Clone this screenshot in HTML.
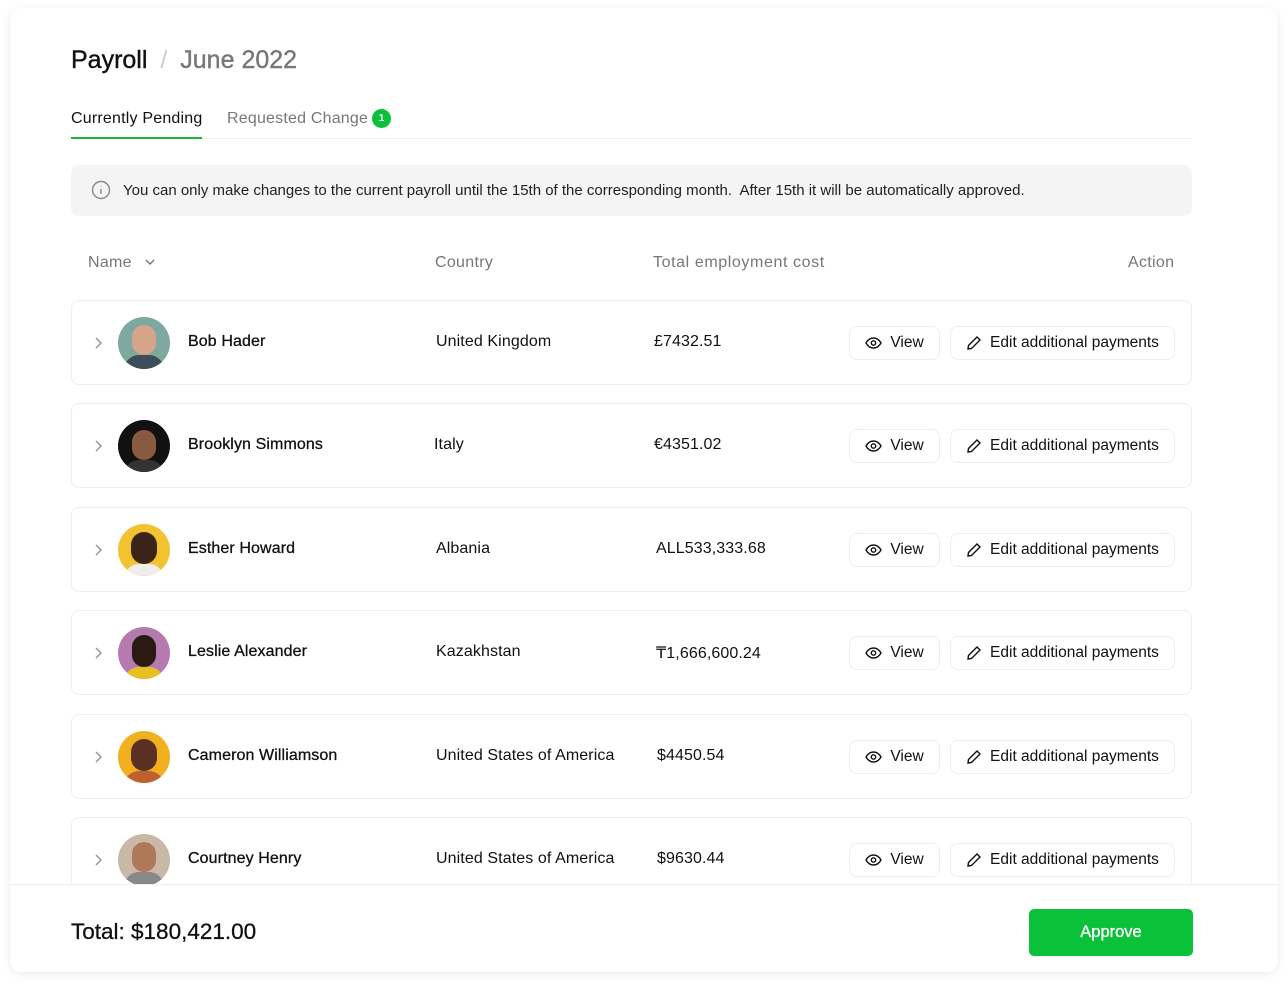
<!DOCTYPE html>
<html><head><meta charset="utf-8"><style>
*{box-sizing:border-box;margin:0;padding:0}
body{width:1288px;height:987px;background:#fff;font-family:"Liberation Sans",sans-serif;color:#111;position:relative;overflow:hidden}
.card{position:absolute;left:10px;top:8px;width:1268px;height:964px;background:#fff;border-radius:12px;box-shadow:0 2px 10px rgba(0,0,0,.08);overflow:hidden}
.t{position:absolute;white-space:nowrap}
.row{position:absolute;left:61px;width:1121px;height:85px;border:1px solid #eee;border-radius:8px;background:#fff}
.row .t{top:32px;font-size:16px;letter-spacing:0.1px}
.row .nm{-webkit-text-stroke:0.3px #111}
.av{position:absolute;left:46px;top:16px;width:52px;height:52px;border-radius:50%;overflow:hidden}
.btn{position:absolute;top:25px;height:34px;border:1px solid #eee;border-radius:8px;font-size:15.5px;display:flex;align-items:center;justify-content:center;gap:8px;color:#111}
.chev{position:absolute;left:20px;top:35px}
.foot{position:absolute;left:0;top:876px;width:1268px;height:88px;background:#fff;border-top:1px solid #eee}
.hd{top:246px;font-size:16px;color:#777;letter-spacing:0.3px}
</style></head><body>
<div class="card">
<div class="t" style="left:61px;top:38px;font-size:25px;-webkit-text-stroke:0.4px #111">Payroll <span style="color:#ccc;margin:0 6px;-webkit-text-stroke:0">/</span> <span style="color:#777;-webkit-text-stroke:0.4px #777">June 2022</span></div>
<div class="t" style="left:61px;top:102px;font-size:16px;letter-spacing:0.2px">Currently Pending</div>
<div class="t" style="left:217px;top:102px;font-size:16px;color:#777;letter-spacing:0.2px">Requested Change</div>
<div class="t" style="left:362px;top:101px;width:19px;height:19px;border-radius:50%;background:#0cc13a;color:#fff;font-size:10px;font-weight:bold;text-align:center;line-height:19px">1</div>
<div class="t" style="left:61px;top:130px;width:1121px;height:1px;background:#eee"></div>
<div class="t" style="left:61px;top:129px;width:131px;height:2px;background:#1db33c"></div>
<div class="t" style="left:61px;top:157px;width:1121px;height:51px;background:#f4f4f4;border-radius:8px"></div>
<svg class="t" style="left:81px;top:172px" width="20" height="20" viewBox="0 0 20 20" fill="none" stroke="#888" stroke-width="1.4"><circle cx="10" cy="10" r="8.5"/><path d="M10 9v5M10 6v.5"/></svg>
<div class="t" style="left:113px;top:174px;font-size:15px;color:#222">You can only make changes to the current payroll until the 15th of the corresponding month.&nbsp; After 15th it will be automatically approved.</div>
<div class="t hd" style="left:78px">Name <svg width="14" height="10" viewBox="0 0 14 10" style="margin-left:6px"><path d="M3 3l4 4 4-4" stroke="#777" stroke-width="1.5" fill="none"/></svg></div>
<div class="t hd" style="left:425px">Country</div>
<div class="t hd" style="left:643px;letter-spacing:0.6px">Total employment cost</div>
<div class="t hd" style="left:1118px">Action</div>

<div class="row" style="top:292px">
<svg class="chev" width="12" height="14"><path d="M4 2l5 5-5 5" stroke="#999" stroke-width="1.5" fill="none"/></svg>
<div class="av" style="background:#7fa8a0"><div style="position:absolute;left:14px;top:8px;width:24px;height:30px;border-radius:12px;background:#d6a488"></div><div style="position:absolute;left:6px;top:38px;width:40px;height:30px;border-radius:20px;background:#3d4d5a"></div></div>
<div class="t nm" style="left:116px">Bob Hader</div><div class="t" style="left:364px">United Kingdom</div><div class="t" style="left:582px">£7432.51</div>
<div class="btn" style="left:777px;width:91px"><svg width="17" height="12" viewBox="0 0 17 12" fill="none" stroke="#111" stroke-width="1.4"><path d="M1 6c2-3.5 4.5-5 7.5-5s5.5 1.5 7.5 5c-2 3.5-4.5 5-7.5 5S3 9.5 1 6z"/><circle cx="8.5" cy="6" r="2.2"/></svg>View</div>
<div class="btn" style="left:878px;width:225px"><svg width="16" height="16" viewBox="0 0 16 16" fill="none" stroke="#111" stroke-width="1.4"><path d="M11 2l3 3-8.5 8.5L2 14l.5-3.5z"/></svg>Edit additional payments</div>
</div>
<div class="row" style="top:395px">
<svg class="chev" width="12" height="14"><path d="M4 2l5 5-5 5" stroke="#999" stroke-width="1.5" fill="none"/></svg>
<div class="av" style="background:#111"><div style="position:absolute;left:14px;top:10px;width:24px;height:30px;border-radius:12px;background:#8a5a40"></div><div style="position:absolute;left:6px;top:40px;width:40px;height:30px;border-radius:20px;background:#333"></div></div>
<div class="t nm" style="left:116px">Brooklyn Simmons</div><div class="t" style="left:362px">Italy</div><div class="t" style="left:582px">€4351.02</div>
<div class="btn" style="left:777px;width:91px"><svg width="17" height="12" viewBox="0 0 17 12" fill="none" stroke="#111" stroke-width="1.4"><path d="M1 6c2-3.5 4.5-5 7.5-5s5.5 1.5 7.5 5c-2 3.5-4.5 5-7.5 5S3 9.5 1 6z"/><circle cx="8.5" cy="6" r="2.2"/></svg>View</div>
<div class="btn" style="left:878px;width:225px"><svg width="16" height="16" viewBox="0 0 16 16" fill="none" stroke="#111" stroke-width="1.4"><path d="M11 2l3 3-8.5 8.5L2 14l.5-3.5z"/></svg>Edit additional payments</div>
</div>
<div class="row" style="top:499px">
<svg class="chev" width="12" height="14"><path d="M4 2l5 5-5 5" stroke="#999" stroke-width="1.5" fill="none"/></svg>
<div class="av" style="background:#f2c230"><div style="position:absolute;left:13px;top:8px;width:26px;height:32px;border-radius:13px;background:#3a2418"></div><div style="position:absolute;left:6px;top:40px;width:40px;height:30px;border-radius:20px;background:#eee"></div></div>
<div class="t nm" style="left:116px">Esther Howard</div><div class="t" style="left:364px">Albania</div><div class="t" style="left:584px">ALL533,333.68</div>
<div class="btn" style="left:777px;width:91px"><svg width="17" height="12" viewBox="0 0 17 12" fill="none" stroke="#111" stroke-width="1.4"><path d="M1 6c2-3.5 4.5-5 7.5-5s5.5 1.5 7.5 5c-2 3.5-4.5 5-7.5 5S3 9.5 1 6z"/><circle cx="8.5" cy="6" r="2.2"/></svg>View</div>
<div class="btn" style="left:878px;width:225px"><svg width="16" height="16" viewBox="0 0 16 16" fill="none" stroke="#111" stroke-width="1.4"><path d="M11 2l3 3-8.5 8.5L2 14l.5-3.5z"/></svg>Edit additional payments</div>
</div>
<div class="row" style="top:602px">
<svg class="chev" width="12" height="14"><path d="M4 2l5 5-5 5" stroke="#999" stroke-width="1.5" fill="none"/></svg>
<div class="av" style="background:#b57ab0"><div style="position:absolute;left:14px;top:8px;width:24px;height:32px;border-radius:12px;background:#2a1a14"></div><div style="position:absolute;left:6px;top:40px;width:40px;height:30px;border-radius:20px;background:#e8c020"></div></div>
<div class="t nm" style="left:116px">Leslie Alexander</div><div class="t" style="left:364px">Kazakhstan</div><div class="t" style="left:584px">₸1,666,600.24</div>
<div class="btn" style="left:777px;width:91px"><svg width="17" height="12" viewBox="0 0 17 12" fill="none" stroke="#111" stroke-width="1.4"><path d="M1 6c2-3.5 4.5-5 7.5-5s5.5 1.5 7.5 5c-2 3.5-4.5 5-7.5 5S3 9.5 1 6z"/><circle cx="8.5" cy="6" r="2.2"/></svg>View</div>
<div class="btn" style="left:878px;width:225px"><svg width="16" height="16" viewBox="0 0 16 16" fill="none" stroke="#111" stroke-width="1.4"><path d="M11 2l3 3-8.5 8.5L2 14l.5-3.5z"/></svg>Edit additional payments</div>
</div>
<div class="row" style="top:706px">
<svg class="chev" width="12" height="14"><path d="M4 2l5 5-5 5" stroke="#999" stroke-width="1.5" fill="none"/></svg>
<div class="av" style="background:#f0b020"><div style="position:absolute;left:13px;top:8px;width:26px;height:32px;border-radius:13px;background:#5a3020"></div><div style="position:absolute;left:6px;top:40px;width:40px;height:30px;border-radius:20px;background:#c06030"></div></div>
<div class="t nm" style="left:116px">Cameron Williamson</div><div class="t" style="left:364px">United States of America</div><div class="t" style="left:585px">$4450.54</div>
<div class="btn" style="left:777px;width:91px"><svg width="17" height="12" viewBox="0 0 17 12" fill="none" stroke="#111" stroke-width="1.4"><path d="M1 6c2-3.5 4.5-5 7.5-5s5.5 1.5 7.5 5c-2 3.5-4.5 5-7.5 5S3 9.5 1 6z"/><circle cx="8.5" cy="6" r="2.2"/></svg>View</div>
<div class="btn" style="left:878px;width:225px"><svg width="16" height="16" viewBox="0 0 16 16" fill="none" stroke="#111" stroke-width="1.4"><path d="M11 2l3 3-8.5 8.5L2 14l.5-3.5z"/></svg>Edit additional payments</div>
</div>
<div class="row" style="top:809px">
<svg class="chev" width="12" height="14"><path d="M4 2l5 5-5 5" stroke="#999" stroke-width="1.5" fill="none"/></svg>
<div class="av" style="background:#c8b8a8"><div style="position:absolute;left:14px;top:8px;width:24px;height:30px;border-radius:12px;background:#b07858"></div><div style="position:absolute;left:6px;top:38px;width:40px;height:30px;border-radius:20px;background:#888"></div></div>
<div class="t nm" style="left:116px">Courtney Henry</div><div class="t" style="left:364px">United States of America</div><div class="t" style="left:585px">$9630.44</div>
<div class="btn" style="left:777px;width:91px"><svg width="17" height="12" viewBox="0 0 17 12" fill="none" stroke="#111" stroke-width="1.4"><path d="M1 6c2-3.5 4.5-5 7.5-5s5.5 1.5 7.5 5c-2 3.5-4.5 5-7.5 5S3 9.5 1 6z"/><circle cx="8.5" cy="6" r="2.2"/></svg>View</div>
<div class="btn" style="left:878px;width:225px"><svg width="16" height="16" viewBox="0 0 16 16" fill="none" stroke="#111" stroke-width="1.4"><path d="M11 2l3 3-8.5 8.5L2 14l.5-3.5z"/></svg>Edit additional payments</div>
</div>

<div class="foot">
<div class="t" style="left:61px;top:34px;font-size:22.5px;-webkit-text-stroke:0.3px #111">Total: $180,421.00</div>
<div class="t" style="left:1019px;top:24px;width:164px;height:47px;background:#0cc13a;border-radius:5px;color:#fff;font-size:16.5px;text-align:center;line-height:47px;-webkit-text-stroke:0.3px #fff">Approve</div>
</div>
</div>
</body></html>
